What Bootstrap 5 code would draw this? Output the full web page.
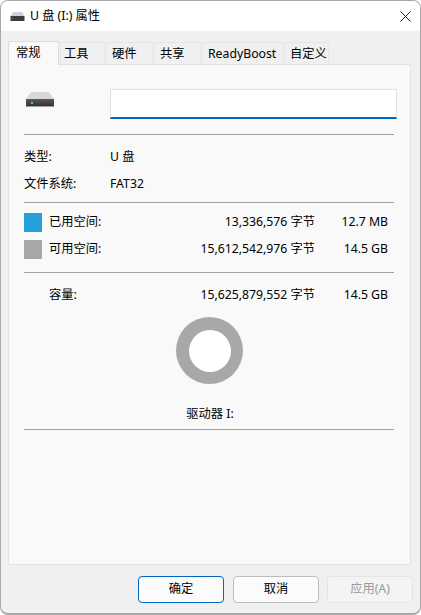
<!DOCTYPE html>
<html lang="zh">
<head>
<meta charset="utf-8">
<title>U 盘 (I:) 属性</title>
<link href="https://cdn.jsdelivr.net/npm/bootstrap@5.3.0/dist/css/bootstrap.min.css" rel="stylesheet">
<style>
html,body{height:100%;margin:0;background:#fff}
body{font-family:"Noto Sans","Noto Sans CJK SC",sans-serif;font-size:12.25px;line-height:16px;color:#000}
.win{width:421px;height:615px;background:#f0f0f0;border:1px solid #a8a8a8;border-width:1px 1px 2px 1px;border-radius:8px;overflow:hidden;display:flex;flex-direction:column}
.tbar{height:30px;background:#fff;padding-left:9px;flex:none}
.ttl{margin-left:5px}
.xbtn{margin-right:9px;width:11px;height:11px}
.tabrow{height:33px;padding:0 0 0 7px;gap:1px;flex:none;position:relative;z-index:1}
.tb{height:22px;background:#f0f0f0;border:1px solid #e6e6e6;border-bottom:0;border-radius:2px 2px 0 0;display:flex;align-items:center;padding-left:5px;color:#000}
.tb.on{background:#f9f9f9;height:24px;margin-bottom:-1px;padding-left:7px;padding-bottom:2px;border-color:#dcdcdc}
.t1{width:51px}.t2{width:45px;padding-left:3px}.t3,.t4{width:47px}.t5{width:81px}.t6{width:45px}
.pane{width:403px;height:501px;margin-left:7px;background:#f9f9f9;border:1px solid #e3e3e3;padding-left:15px;flex:none}
.top{height:69px;align-items:flex-start;padding-top:24px}
.hd{width:86px;padding:2px 0 0 2px;flex:none}
.nm{width:287px;height:30px;background:#fff;border:1px solid #e2e2e2;border-bottom:2px solid #0067c0}
.ln{width:370px;height:1px;background:#a0a0a0}
.lab{width:86px;flex:none}
.kv{height:27px}
.sw{width:18px;height:19px;flex:none;margin-right:7px}
.blue{background:#26a0da}.gray{background:#a8a8a8}
.usage{height:27px}
.usage .ulab,.usage .bytes,.usage .size{margin-top:-1px}
.usage.cap .ulab,.usage.cap .bytes,.usage.cap .size{margin-top:1px}
.nolabel{margin-left:25px}
.ulab{width:100px}
.bytes{width:166px;text-align:right;flex:none}
.size{width:73px;text-align:right;flex:none}
.donut{width:67px;height:67px;background:#a8a8a8;border-radius:50%;margin-left:152px}
.hole{width:42px;height:42px;background:#fff;border-radius:50%}
.drv{width:372px;text-align:center;height:45px;padding-top:22px}
.foot{flex:1;padding:11px 7px 0 0;justify-content:flex-end;gap:8px}
.bt{width:86px;height:27px;background:#fbfbfb;border:1px solid #bcbcbc;border-radius:4px;padding:0;font-size:12.25px;line-height:1;color:#000;font-family:inherit}
.bt.pri{border:1px solid #0067c0;margin-right:1px}
.bt:disabled{background:#f4f4f4;border-color:#e4e4e4;color:#9a9a9a;opacity:1}
.m5{margin-top:5px}
.m6{margin-top:6px}
.m8{margin-top:8px}
.m9{margin-top:9px}
</style>
</head>
<body>
<div class="win">
  <div class="tbar d-flex align-items-center justify-content-between">
    <div class="d-flex align-items-center">
      <svg width="15" height="11" viewBox="0 0 15 11"><path d="M3 1h9l2.500 4h-14z" fill="#d2d2d2"/><rect x="0.500" y="5" width="14" height="5" fill="#3d3d3d"/><rect x="2" y="7" width="1" height="1" fill="#4ecb4e"/></svg>
      <span class="ttl">U 盘 (I:) 属性</span>
    </div>
    <svg class="xbtn" viewBox="0 0 11 11"><path d="M.5.5l10 10M10.500.5l-10 10" stroke="#222" stroke-width="1" fill="none"/></svg>
  </div>
  <div class="tabrow d-flex align-items-end">
    <div class="tb on t1">常规</div>
    <div class="tb t2">工具</div>
    <div class="tb t3">硬件</div>
    <div class="tb t4">共享</div>
    <div class="tb t5">ReadyBoost</div>
    <div class="tb t6">自定义</div>
  </div>
  <div class="pane">
    <div class="top d-flex">
      <div class="hd">
        <svg width="28" height="15" viewBox="0 0 28 15"><defs><linearGradient id="g" x1="0" y1="0" x2="0" y2="1"><stop offset="0" stop-color="#5a5a5a"/><stop offset="1" stop-color="#2e2e2e"/></linearGradient></defs><path d="M5 0h18l5 7H0z" fill="#d8d8d8"/><rect y="7" width="28" height="8" fill="url(#g)"/><rect y="14" width="28" height="1" fill="#a0a0a0"/><rect x="5" y="10" width="2" height="2" fill="#52d552"/></svg>
      </div>
      <div class="nm"></div>
    </div>
    <div class="ln"></div>
    <div class="d-flex align-items-center kv m8"><div class="lab">类型:</div><div>U 盘</div></div>
    <div class="d-flex align-items-center kv"><div class="lab">文件系统:</div><div>FAT32</div></div>
    <div class="ln m5"></div>
    <div class="d-flex align-items-center usage m6"><div class="sw blue"></div><div class="ulab">已用空间:</div><div class="bytes">13,336,576 字节</div><div class="size">12.7 MB</div></div>
    <div class="d-flex align-items-center usage"><div class="sw gray"></div><div class="ulab">可用空间:</div><div class="bytes">15,612,542,976 字节</div><div class="size">14.5 GB</div></div>
    <div class="ln m9"></div>
    <div class="d-flex align-items-center usage cap m8"><div class="ulab nolabel">容量:</div><div class="bytes">15,625,879,552 字节</div><div class="size">14.5 GB</div></div>
    <div class="donut d-flex align-items-center justify-content-center m9"><div class="hole"></div></div>
    <div class="drv">驱动器 I:</div>
    <div class="ln"></div>
  </div>
  <div class="foot d-flex">
    <button type="button" class="bt pri">确定</button>
    <button type="button" class="bt">取消</button>
    <button type="button" class="bt" disabled>应用(A)</button>
  </div>
</div>
<script src="https://cdn.jsdelivr.net/npm/bootstrap@5.3.0/dist/js/bootstrap.bundle.min.js"></script>
</body>
</html>
